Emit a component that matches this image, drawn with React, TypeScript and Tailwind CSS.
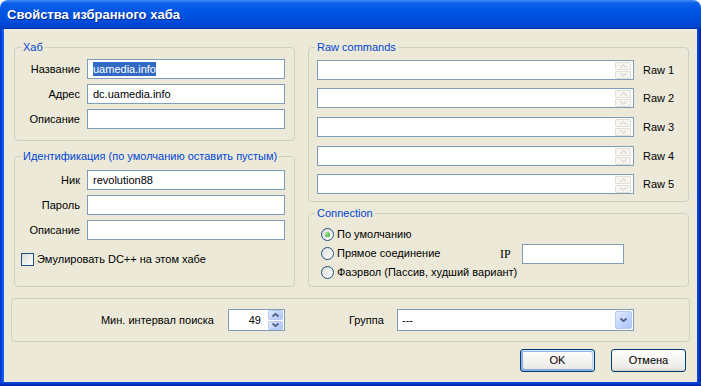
import React from 'react';

type Kids = { children?: React.ReactNode; className?: string };

const Group = ({ title, className = '', children }: Kids & { title: string }) => (
  <fieldset className={`min-w-0 border border-[#D0D0BF] rounded-[4px] ${className}`}>
    <legend className="ml-[6px] px-[2px] text-[#0046D5] leading-[13px]">{title}</legend>
    {children}
  </fieldset>
);

const Edit = ({ className = '', children }: Kids) => (
  <div className={`h-[20px] border border-[#7F9DB9] bg-white flex items-center pl-[5px] ${className}`}>{children}</div>
);

const Row = ({ label, children }: Kids & { label: string }) => (
  <div className="flex items-center">
    <span className="w-[65px] text-right">{label}</span>
    <Edit className="ml-[7px] w-[198px]">{children}</Edit>
  </div>
);

const Arrow = ({ up, color, bold }: { up?: boolean; color: string; bold?: boolean }) => (
  <svg width="7" height="4" viewBox="0 0 7 4" className="block">
    <polyline
      points={up ? '0.5,3.6 3.5,0.8 6.5,3.6' : '0.5,0.4 3.5,3.2 6.5,0.4'}
      fill="none"
      stroke={color}
      strokeWidth={bold ? 1.8 : 1}
    />
  </svg>
);

const GhostSpin = () => (
  <div className="ml-auto mr-[1px] w-[16px] h-[17px] flex flex-col gap-[1px]">
    <div className="flex-1 rounded-[1px] border border-[#E2E0D6] bg-[#F6F5F0] flex items-center justify-center">
      <Arrow up color="#C8C6BB" />
    </div>
    <div className="flex-1 rounded-[1px] border border-[#E2E0D6] bg-[#F6F5F0] flex items-center justify-center">
      <Arrow color="#C8C6BB" />
    </div>
  </div>
);

const BlueBtn = ({ children, className = '' }: Kids) => (
  <div
    className={`rounded-[2px] border border-[#B5C8F5] bg-[linear-gradient(135deg,#E2EAFE,#C0D2FB_60%,#B1C6F6)] flex items-center justify-center ${className}`}
  >
    {children}
  </div>
);

const Radio = ({ checked, label }: { checked?: boolean; label: string }) => (
  <div className="flex items-center">
    <span className="w-[13px] h-[13px] rounded-full border border-[#1C5180] bg-[linear-gradient(135deg,#DCDCD7,#FFFFFF)] flex items-center justify-center">
      {checked && (
        <span className="w-[5px] h-[5px] rounded-full bg-[radial-gradient(circle_at_35%_35%,#9CEB98,#21A121)]" />
      )}
    </span>
    <span className="ml-[3px]">{label}</span>
  </div>
);

const XpButton = ({ children, focused }: Kids & { focused?: boolean }) => (
  <button
    className={`w-[75px] h-[23px] rounded-[3px] border border-[#003C74] bg-[linear-gradient(180deg,#FFFFFF,#ECEBE6_86%,#D6D0C5)] ${
      focused
        ? 'shadow-[inset_-1px_1px_#CEE7FF,inset_1px_2px_#98B8EA,inset_-2px_2px_#BCD4F6,inset_1px_-1px_#89ADE4,inset_2px_-2px_#89ADE4]'
        : ''
    }`}
  >
    {children}
  </button>
);

export default function App() {
  const rawGaps = ['', 'mt-[8px]', 'mt-[9px]', 'mt-[9px]', 'mt-[8px]'];

  return (
    <div className="w-[701px] h-[386px] bg-white font-['Liberation_Sans',Arial,sans-serif] text-[11px] text-black">
      <div className="w-full h-full flex flex-col rounded-t-[8px] overflow-hidden">
        {/* title bar */}
        <div className="h-[29px] shrink-0 flex items-center pl-[7px] bg-[linear-gradient(180deg,#3D8DF7_0%,#0A5FEA_12%,#0055E5_40%,#004CDB_75%,#0043CC_92%,#0036B4_100%)]">
          <span className="text-white font-bold text-[13px] [text-shadow:1px_1px_0_#0A2A8C]">
            Свойства избранного хаба
          </span>
        </div>

        <div className="flex-1 flex min-h-0">
          <div className="w-[4px] bg-[linear-gradient(90deg,#0030C8,#0A50E0_50%,#166AEE)]" />

          <div className="flex-1 bg-[#ECE9D8] flex flex-col pt-[12px]">
            <div className="flex ml-[10px] mr-[8px]">
              {/* left column */}
              <div className="w-[281px] flex flex-col">
                <Group title="Хаб" className="h-[100px]">
                  <div className="pt-[5px] flex flex-col gap-[5px]">
                    <Row label="Название">
                      <span className="bg-[#316AC5] text-white leading-[14px]">uamedia.info</span>
                    </Row>
                    <Row label="Адрес">dc.uamedia.info</Row>
                    <Row label="Описание" />
                  </div>
                </Group>

                <Group title="Идентификация (по умолчанию оставить пустым)" className="h-[137px] mt-[9px]">
                  <div className="pt-[7px] flex flex-col gap-[5px]">
                    <Row label="Ник">revolution88</Row>
                    <Row label="Пароль" />
                    <Row label="Описание" />
                  </div>
                  <div className="mt-[11px] ml-[6px] flex items-center">
                    <span className="w-[13px] h-[13px] border border-[#1C5180] bg-[linear-gradient(135deg,#DCDCD7,#FFFFFF)]" />
                    <span className="ml-[3px]">Эмулировать DC++ на этом хабе</span>
                  </div>
                </Group>
              </div>

              {/* right column */}
              <div className="ml-[13px] flex-1 flex flex-col">
                <Group title="Raw commands" className="h-[161px]">
                  <div className="pt-[6px]">
                    {[1, 2, 3, 4, 5].map((n, i) => (
                      <div key={n} className={`flex items-center ${rawGaps[i]}`}>
                        <Edit className="ml-[8px] w-[317px] pr-[1px]">
                          <GhostSpin />
                        </Edit>
                        <span className="ml-[9px]">Raw {n}</span>
                      </div>
                    ))}
                  </div>
                </Group>

                <Group title="Connection" className="h-[80px] mt-[5px]">
                  <div className="pt-[5px] pl-[12px] flex flex-col">
                    <div className="h-[19px] flex items-center">
                      <Radio checked label="По умолчанию" />
                    </div>
                    <div className="h-[19px] flex items-center">
                      <div className="w-[179px]">
                        <Radio label="Прямое соединение" />
                      </div>
                      <span className="w-[22px] font-['Liberation_Serif',serif] text-[12px]">IP</span>
                      <Edit className="w-[102px]" />
                    </div>
                    <div className="h-[19px] flex items-center">
                      <Radio label="Фаэрвол (Пассив, худший вариант)" />
                    </div>
                  </div>
                </Group>
              </div>
            </div>

            {/* bottom group */}
            <div className="ml-[7px] mr-[7px] mt-[11px] h-[44px] border border-[#D0D0BF] rounded-[4px] flex items-center">
              <span className="w-[202px] text-right">Мин. интервал поиска</span>
              <div className="ml-[14px] w-[57px] h-[22px] border border-[#7F9DB9] bg-white flex items-center">
                <span className="flex-1 text-right pr-[7px]">49</span>
                <div className="w-[15px] h-[20px] mr-[1px] flex flex-col gap-[1px]">
                  <BlueBtn className="flex-1">
                    <Arrow up bold color="#4D6185" />
                  </BlueBtn>
                  <BlueBtn className="flex-1">
                    <Arrow bold color="#4D6185" />
                  </BlueBtn>
                </div>
              </div>
              <span className="ml-[64px] w-[38px]">Группа</span>
              <div className="ml-[10px] w-[237px] h-[22px] border border-[#7F9DB9] bg-white flex items-center pl-[4px]">
                <span>---</span>
                <BlueBtn className="ml-auto mr-[1px] w-[17px] h-[18px]">
                  <Arrow bold color="#4D6185" />
                </BlueBtn>
              </div>
            </div>

            {/* buttons */}
            <div className="mt-[7px] flex justify-end gap-[16px] mr-[11px]">
              <XpButton focused>OK</XpButton>
              <XpButton>Отмена</XpButton>
            </div>
          </div>

          <div className="w-[4px] bg-[linear-gradient(90deg,#0A50E0,#0030C8_60%,#001EA0)]" />
        </div>

        <div className="h-[4px] shrink-0 bg-[linear-gradient(180deg,#0A4FDF,#0030C8_60%,#001EA0)]" />
      </div>
    </div>
  );
}
